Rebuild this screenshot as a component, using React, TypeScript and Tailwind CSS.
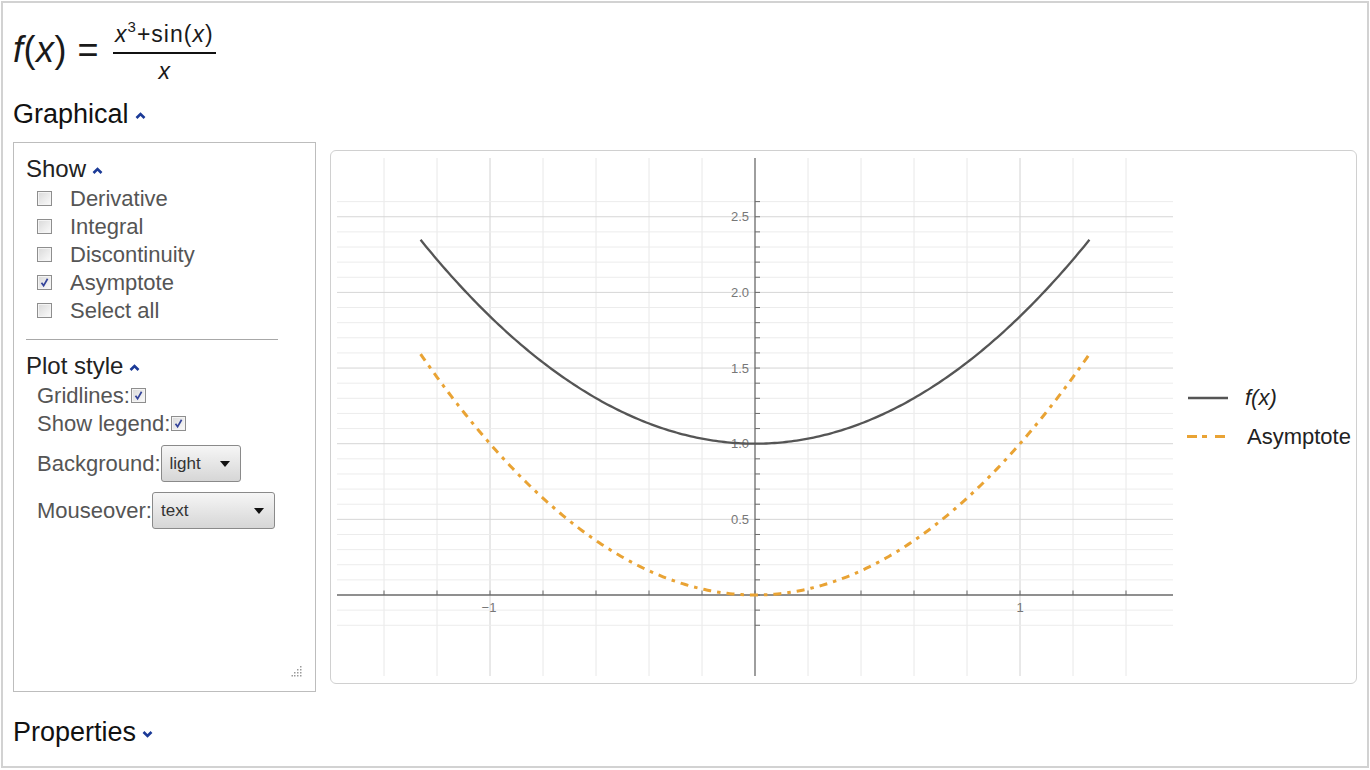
import React from "react";

const X = (x: number) => 755 + 265 * x;
const Y = (y: number) => 595 - 151.3 * y;

function curve(fn: (x: number) => number, a: number, b: number, n = 240) {
  const pts: string[] = [];
  for (let i = 0; i <= n; i++) {
    const x = a + ((b - a) * i) / n;
    pts.push(`${i === 0 ? "M" : "L"}${X(x).toFixed(2)} ${Y(fn(x)).toFixed(2)}`);
  }
  return pts.join(" ");
}

const f = (x: number) => x * x + (Math.abs(x) < 1e-9 ? 1 : Math.sin(x) / x);
const asym = (x: number) => x * x;

function Caret({ down = false }: { down?: boolean }) {
  return (
    <svg width="11" height="8" viewBox="0 0 11 8" className="shrink-0 mt-[3px]">
      <path
        d={down ? "M1.5 2 L5.5 6 L9.5 2" : "M1.5 6 L5.5 2 L9.5 6"}
        fill="none"
        stroke="#1b3a97"
        strokeWidth="2.6"
      />
    </svg>
  );
}

function Box({ checked = false }: { checked?: boolean }) {
  return (
    <span className="relative inline-block w-[15px] h-[15px] shrink-0 border border-[#8e8e8e] bg-gradient-to-br from-[#d9d9d9] to-[#fbfbfb] shadow-[inset_0_0_0_1px_#f4f4f4]">
      {checked && (
        <svg className="absolute inset-0" width="13" height="13" viewBox="0 0 13 13">
          <path d="M3.5 6.8 L5.6 9.6 L9.6 2.8" fill="none" stroke="#34449a" strokeWidth="1.7" />
        </svg>
      )}
    </span>
  );
}

function Select({ label, w }: { label: string; w: string }) {
  return (
    <span
      className={`${w} h-[37px] flex items-center justify-between pl-[8px] pr-[10px] rounded-[3px] border border-[#8a8a8a] bg-gradient-to-b from-[#f6f6f6] to-[#d6d6d6] text-[17px] text-[#333]`}
    >
      {label}
      <svg width="10" height="6" viewBox="0 0 10 6">
        <path d="M0 0 L10 0 L5 6 Z" fill="#111" />
      </svg>
    </span>
  );
}

function Plot() {
  const vx: number[] = [];
  for (let i = -7; i <= 7; i++) vx.push(i * 0.2);
  const hy: number[] = [];
  for (let i = -2; i <= 26; i++) hy.push(i / 10);
  const font = "'Liberation Sans', Arial, sans-serif";

  return (
    <svg width="1025" height="532" viewBox="331 151 1025 532" className="block">
      {vx.map((x) =>
        Math.abs(x) < 1e-6 ? null : (
          <line
            key={"v" + x}
            x1={X(x)}
            x2={X(x)}
            y1={158}
            y2={676}
            stroke={Math.abs(Math.abs(x) - 1) < 1e-6 ? "#d2d2d2" : "#e8e8e8"}
            strokeWidth="1"
          />
        )
      )}
      {hy.map((y) =>
        Math.abs(y) < 1e-6 ? null : (
          <line
            key={"h" + y}
            x1={337}
            x2={1173}
            y1={Y(y)}
            y2={Y(y)}
            stroke={Math.abs(y * 2 - Math.round(y * 2)) < 1e-6 ? "#d6d6d6" : "#ececec"}
            strokeWidth="1"
          />
        )
      )}
      <line x1={337} x2={1173} y1={595} y2={595} stroke="#6a6a6a" strokeWidth="1.3" />
      <line x1={755} x2={755} y1={158} y2={676} stroke="#6a6a6a" strokeWidth="1.3" />
      {vx.map((x) => (
        <line key={"tx" + x} x1={X(x)} x2={X(x)} y1={590.5} y2={595} stroke="#6a6a6a" strokeWidth="1" />
      ))}
      {hy.map((y) => (
        <line key={"ty" + y} x1={755} x2={760} y1={Y(y)} y2={Y(y)} stroke="#6a6a6a" strokeWidth="1" />
      ))}
      {["0.5", "1.0", "1.5", "2.0", "2.5"].map((t) => (
        <text key={t} x={749} y={Y(parseFloat(t)) + 4.5} textAnchor="end" fontSize="13" fill="#777" fontFamily={font}>
          {t}
        </text>
      ))}
      <text x={X(-1) - 1} y={612} textAnchor="middle" fontSize="13" fill="#777" fontFamily={font}>
        −1
      </text>
      <text x={X(1)} y={612} textAnchor="middle" fontSize="13" fill="#777" fontFamily={font}>
        1
      </text>
      <path d={curve(asym, -1.262, 1.262)} fill="none" stroke="#e9a334" strokeWidth="3" strokeDasharray="8 6 3.5 6" />
      <path d={curve(f, -1.262, 1.262)} fill="none" stroke="#555" strokeWidth="2.3" />
      <line x1={1188} x2={1228} y1={398} y2={398} stroke="#555" strokeWidth="2.6" />
      <text x={1245} y={405} fontSize="22" fontStyle="italic" fill="#222" fontFamily={font}>
        f(x)
      </text>
      <line x1={1187} x2={1228} y1={436.5} y2={436.5} stroke="#e9a334" strokeWidth="2.8" strokeDasharray="10 5 5 8" />
      <text x={1247} y={444} fontSize="22" fill="#222" fontFamily={font}>
        Asymptote
      </text>
    </svg>
  );
}

export default function App() {
  return (
    <div className="w-[1370px] h-[770px] bg-white p-px font-['Liberation_Sans',Arial,sans-serif] text-[#1a1a1a]">
      <div className="h-[767px] w-[1368px] border-2 border-[#d2d2d2] pl-[10px] flex flex-col">
        {/* formula */}
        <div className="mt-[19px] flex items-start h-[58px]">
          <span className="mt-[8px] text-[36px] leading-[40px] tracking-[0.5px] whitespace-pre">
            <i>f</i>(<i>x</i>) =
          </span>
          <div className="ml-[14px] flex flex-col items-center">
            <span className="px-[2px] text-[23px] leading-[24px] tracking-[1px] whitespace-pre">
              <i>x</i>
              <span className="relative -top-[10px] text-[15px]">3</span>+sin(<i>x</i>)
            </span>
            <span className="mt-[3px] h-[2px] w-full bg-[#111]" />
            <span className="mt-[5px] text-[23px] leading-[24px]">
              <i>x</i>
            </span>
          </div>
        </div>

        {/* Graphical */}
        <div className="mt-[19px] h-[30px] flex items-center gap-[6px] text-[27px] leading-[30px] text-[#111]">
          Graphical
          <Caret />
        </div>

        <div className="mt-[13px] flex items-start gap-[14px]">
          {/* controls */}
          <div className="relative w-[303px] h-[550px] border border-[#bdbdbd] pl-[12px] pt-[12px]">
            <div className="flex items-center gap-[6px] text-[24px] leading-[28px] text-[#222]">
              Show
              <Caret />
            </div>
            <div className="mt-px">
              {["Derivative", "Integral", "Discontinuity", "Asymptote", "Select all"].map((t) => (
                <div key={t} className="ml-[11px] h-[28px] flex items-center gap-[18px] text-[22px] text-[#555]">
                  <Box checked={t === "Asymptote"} />
                  {t}
                </div>
              ))}
            </div>
            <div className="mt-[15px] h-px w-[252px] bg-[#a8a8a8]" />
            <div className="mt-[12px] flex items-center gap-[6px] text-[24px] leading-[28px] text-[#222]">
              Plot style
              <Caret />
            </div>
            <div className="mt-[1px] ml-[11px] text-[22px] text-[#555]">
              <div className="h-[28px] flex items-center gap-px">
                Gridlines:
                <Box checked />
              </div>
              <div className="h-[28px] flex items-center gap-px">
                Show legend:
                <Box checked />
              </div>
              <div className="mt-[8px] h-[37px] flex items-center">
                Background:
                <Select label="light" w="w-[80px]" />
              </div>
              <div className="mt-[10px] h-[37px] flex items-center">
                Mouseover:
                <Select label="text" w="w-[123px]" />
              </div>
            </div>
            <svg className="absolute right-[13px] bottom-[14px]" width="11" height="11" viewBox="0 0 11 11">
              {[
                [9, 1],
                [9, 4],
                [6, 4],
                [9, 7],
                [6, 7],
                [3, 7],
                [9, 10],
                [6, 10],
                [3, 10],
                [0.5, 10],
              ].map(([cx, cy], i) => (
                <rect key={i} x={cx} y={cy - 1} width="1.5" height="1.5" fill="#9a9a9a" />
              ))}
            </svg>
          </div>

          {/* plot */}
          <div className="mt-[8px] w-[1027px] h-[534px] border border-[#d0d0d0] rounded-[6px] overflow-hidden">
            <Plot />
          </div>
        </div>

        <div className="mt-[25px] h-[30px] flex items-center gap-[6px] text-[27px] leading-[30px] text-[#111]">
          Properties
          <Caret down />
        </div>
      </div>
    </div>
  );
}
